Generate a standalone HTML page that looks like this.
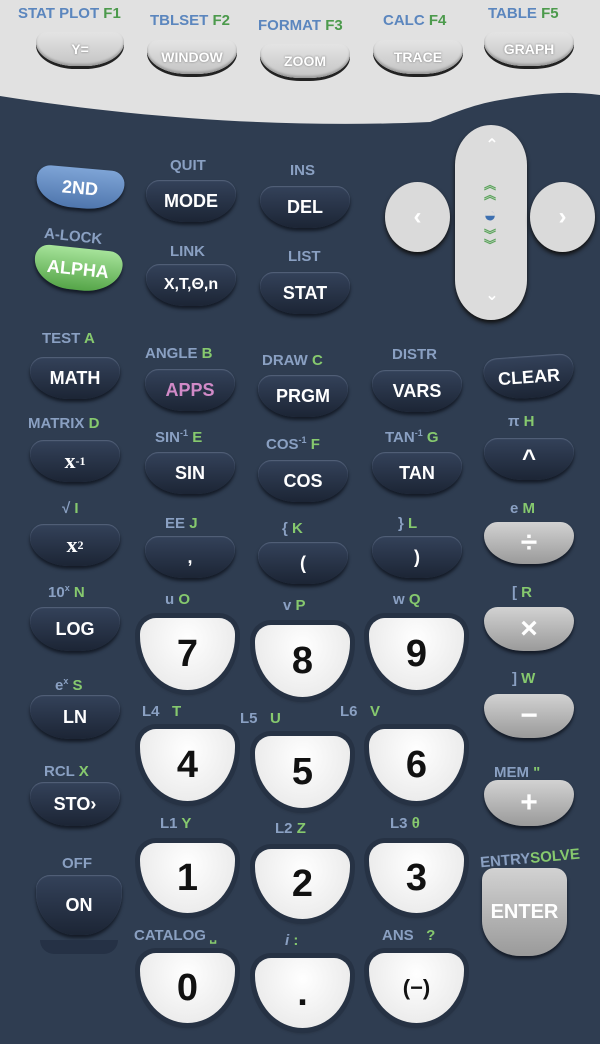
<!DOCTYPE html><html><head><meta charset="utf-8"><style>
*{margin:0;padding:0;box-sizing:border-box}
body{width:600px;height:1044px;background:#2f3d51;position:relative;overflow:hidden;font-family:"Liberation Sans","DejaVu Sans",sans-serif;font-weight:bold}
.a{position:absolute}
.k{position:absolute;display:flex;align-items:center;justify-content:center;border-radius:14px 14px 45% 45%/14px 14px 70% 70%;color:#fff;font-size:18px}
.d{background:linear-gradient(#34425a,#1c2535);box-shadow:0 3px 3px #141b27,inset 0 1px 1px #56647c}
.w{background:radial-gradient(ellipse at 50% 30%,#fff,#ececec 70%,#cfcfcf);color:#111;font-size:38px;border-radius:16px 16px 50% 50%/16px 16px 75% 75%;box-shadow:0 0 0 5px #263244,0 3px 4px #111}
.g{background:linear-gradient(#d2d2d2,#9a9a9a);box-shadow:0 3px 3px #141b27;font-size:30px}
.t{background:linear-gradient(#e4e4e4,#c4c4c4);color:#fff;font-size:14px;text-shadow:0 0 2px #777;box-shadow:0 3px 0 #222,inset 0 -2px 2px #999;border-radius:10px 10px 45% 45%/10px 10px 70% 70%}
.l{position:absolute;font-size:15px;color:#8aa0c2;white-space:nowrap;z-index:2}
.gr{color:#86c96e}
</style></head><body>
<svg class="a" style="left:0;top:0" width="600" height="330"><path d="M0 0H600V95C560 90 530 95 500 100C470 105 450 115 430 122C300 128 150 120 0 96Z" fill="#e1e1e1"/></svg>
<div class="l" style="left:18px;top:5px;color:#5b86be;font-size:15px">STAT PLOT <span style="color:#4c9a4c">F1</span></div>
<div class="l" style="left:150px;top:12px;color:#5b86be;font-size:15px">TBLSET <span style="color:#4c9a4c">F2</span></div>
<div class="l" style="left:258px;top:17px;color:#5b86be;font-size:15px">FORMAT <span style="color:#4c9a4c">F3</span></div>
<div class="l" style="left:383px;top:12px;color:#5b86be;font-size:15px">CALC <span style="color:#4c9a4c">F4</span></div>
<div class="l" style="left:488px;top:5px;color:#5b86be;font-size:15px">TABLE <span style="color:#4c9a4c">F5</span></div>
<div class="k t" style="left:36px;top:32px;width:88px;height:34px">Y=</div>
<div class="k t" style="left:147px;top:40px;width:90px;height:34px">WINDOW</div>
<div class="k t" style="left:260px;top:44px;width:90px;height:34px">ZOOM</div>
<div class="k t" style="left:373px;top:40px;width:90px;height:34px">TRACE</div>
<div class="k t" style="left:484px;top:32px;width:90px;height:34px">GRAPH</div>
<div class="a" style="left:455px;top:125px;width:72px;height:195px;background:#dcdcdc;border-radius:36px/40px;box-shadow:0 3px 4px #111"></div>
<div class="a" style="left:470px;top:180px;width:40px;height:80px;color:#5da55d;font-size:12px;text-align:center;line-height:10px">︽<br>︽<br><span style="color:#3d6fb0;font-size:22px;line-height:30px">◒</span><br>︾<br>︾</div>
<div class="a" style="left:472px;top:135px;width:40px;color:#fff;font-size:16px;text-align:center">⌃</div>
<div class="a" style="left:472px;top:285px;width:40px;color:#fff;font-size:16px;text-align:center">⌄</div>
<div class="a" style="left:385px;top:182px;width:65px;height:70px;background:#dadada;border-radius:50%;box-shadow:0 3px 4px #111;color:#fff;font-size:24px;display:flex;align-items:center;justify-content:center">‹</div>
<div class="a" style="left:530px;top:182px;width:65px;height:70px;background:#dadada;border-radius:50%;box-shadow:0 3px 4px #111;color:#fff;font-size:24px;display:flex;align-items:center;justify-content:center">›</div>
<div class="k" style="left:36px;top:168px;width:88px;height:40px;background:linear-gradient(#7ea4d6,#4f76ad);transform:rotate(5deg);box-shadow:0 3px 3px #141b27">2ND</div>
<div class="l" style="left:170px;top:157px">QUIT</div>
<div class="k d" style="left:146px;top:180px;width:90px;height:42px">MODE</div>
<div class="l" style="left:290px;top:162px">INS</div>
<div class="k d" style="left:260px;top:186px;width:90px;height:42px">DEL</div>
<div class="l" style="left:44px;top:228px;transform:rotate(6deg)">A-LOCK</div>
<div class="k" style="left:34px;top:248px;width:88px;height:42px;background:linear-gradient(#a6e39a,#55a548);transform:rotate(6deg);box-shadow:0 3px 3px #141b27">ALPHA</div>
<div class="l" style="left:170px;top:243px">LINK</div>
<div class="k d" style="left:146px;top:264px;width:90px;height:42px;font-size:16px">X,T,Θ,n</div>
<div class="l" style="left:288px;top:248px">LIST</div>
<div class="k d" style="left:260px;top:272px;width:90px;height:42px">STAT</div>
<div class="l" style="left:42px;top:330px">TEST <span class="gr">A</span></div>
<div class="k d" style="left:30px;top:357px;width:90px;height:42px">MATH</div>
<div class="l" style="left:145px;top:345px">ANGLE <span class="gr">B</span></div>
<div class="k d" style="left:145px;top:369px;width:90px;height:42px;color:#d18ac7">APPS</div>
<div class="l" style="left:262px;top:352px">DRAW <span class="gr">C</span></div>
<div class="k d" style="left:258px;top:375px;width:90px;height:42px">PRGM</div>
<div class="l" style="left:392px;top:346px">DISTR</div>
<div class="k d" style="left:372px;top:370px;width:90px;height:42px">VARS</div>
<div class="k d" style="left:484px;top:356px;width:90px;height:42px;transform:rotate(-4deg)">CLEAR</div>
<div class="l" style="left:28px;top:415px">MATRIX <span class="gr">D</span></div>
<div class="k d" style="left:30px;top:440px;width:90px;height:42px;font-family:'Liberation Serif',serif;font-size:22px">x<sup style="font-size:12px">-1</sup></div>
<div class="l" style="left:155px;top:428px">SIN<sup style="font-size:9px">-1</sup> <span class="gr">E</span></div>
<div class="k d" style="left:145px;top:452px;width:90px;height:42px">SIN</div>
<div class="l" style="left:266px;top:435px">COS<sup style="font-size:9px">-1</sup> <span class="gr">F</span></div>
<div class="k d" style="left:258px;top:460px;width:90px;height:42px">COS</div>
<div class="l" style="left:385px;top:428px">TAN<sup style="font-size:9px">-1</sup> <span class="gr">G</span></div>
<div class="k d" style="left:372px;top:452px;width:90px;height:42px">TAN</div>
<div class="l" style="left:508px;top:413px">π <span class="gr">H</span></div>
<div class="k d" style="left:484px;top:438px;width:90px;height:42px;font-size:24px">^</div>
<div class="l" style="left:62px;top:500px">√ <span class="gr">I</span></div>
<div class="k d" style="left:30px;top:524px;width:90px;height:42px;font-family:'Liberation Serif',serif;font-size:22px">x<sup style="font-size:12px">2</sup></div>
<div class="l" style="left:165px;top:515px">EE <span class="gr">J</span></div>
<div class="k d" style="left:145px;top:536px;width:90px;height:42px">,</div>
<div class="l" style="left:282px;top:520px">{ <span class="gr">K</span></div>
<div class="k d" style="left:258px;top:542px;width:90px;height:42px">(</div>
<div class="l" style="left:398px;top:515px">} <span class="gr">L</span></div>
<div class="k d" style="left:372px;top:536px;width:90px;height:42px">)</div>
<div class="l" style="left:510px;top:500px">e <span class="gr">M</span></div>
<div class="k g" style="left:484px;top:522px;width:90px;height:42px">÷</div>
<div class="l" style="left:48px;top:583px">10<sup style="font-size:9px">x</sup> <span class="gr">N</span></div>
<div class="k d" style="left:30px;top:607px;width:90px;height:44px">LOG</div>
<div class="l" style="left:165px;top:591px">u <span class="gr">O</span></div>
<div class="k w" style="left:140px;top:618px;width:95px;height:72px">7</div>
<div class="l" style="left:283px;top:597px">v <span class="gr">P</span></div>
<div class="k w" style="left:255px;top:625px;width:95px;height:72px">8</div>
<div class="l" style="left:393px;top:591px">w <span class="gr">Q</span></div>
<div class="k w" style="left:369px;top:618px;width:95px;height:72px">9</div>
<div class="l" style="left:512px;top:584px">[ <span class="gr">R</span></div>
<div class="k g" style="left:484px;top:607px;width:90px;height:44px">×</div>
<div class="l" style="left:55px;top:676px">e<sup style="font-size:9px">x</sup> <span class="gr">S</span></div>
<div class="k d" style="left:30px;top:695px;width:90px;height:44px">LN</div>
<div class="l" style="left:142px;top:703px">L4 <span class="gr">&nbsp;&nbsp;T</span></div>
<div class="k w" style="left:140px;top:729px;width:95px;height:72px">4</div>
<div class="l" style="left:240px;top:710px">L5 <span class="gr">&nbsp;&nbsp;U</span></div>
<div class="k w" style="left:255px;top:736px;width:95px;height:72px">5</div>
<div class="l" style="left:340px;top:703px">L6 <span class="gr">&nbsp;&nbsp;V</span></div>
<div class="k w" style="left:369px;top:729px;width:95px;height:72px">6</div>
<div class="l" style="left:512px;top:670px">] <span class="gr">W</span></div>
<div class="k g" style="left:484px;top:694px;width:90px;height:44px">−</div>
<div class="l" style="left:44px;top:763px">RCL <span class="gr">X</span></div>
<div class="k d" style="left:30px;top:782px;width:90px;height:44px">STO›</div>
<div class="l" style="left:160px;top:815px">L1 <span class="gr">Y</span></div>
<div class="k w" style="left:140px;top:843px;width:95px;height:70px">1</div>
<div class="l" style="left:275px;top:820px">L2 <span class="gr">Z</span></div>
<div class="k w" style="left:255px;top:849px;width:95px;height:70px">2</div>
<div class="l" style="left:390px;top:815px">L3 <span class="gr">θ</span></div>
<div class="k w" style="left:369px;top:843px;width:95px;height:70px">3</div>
<div class="l" style="left:494px;top:764px">MEM <span class="gr">"</span></div>
<div class="k g" style="left:484px;top:780px;width:90px;height:46px">+</div>
<div class="l" style="left:62px;top:855px">OFF</div>
<div class="k d" style="left:36px;top:875px;width:86px;height:60px">ON</div>
<div class="a" style="left:40px;top:940px;width:78px;height:14px;border-radius:0 0 40px 40px;background:#253145"></div>
<div class="l" style="left:480px;top:850px;transform:rotate(-5deg)">ENTRY<span class="gr">SOLVE</span></div>
<div class="k g" style="left:482px;top:868px;width:85px;height:88px;font-size:20px;border-radius:12px 12px 45% 45%/12px 12px 40% 40%">ENTER</div>
<div class="l" style="left:134px;top:927px">CATALOG <span class="gr">⎵</span></div>
<div class="k w" style="left:140px;top:953px;width:95px;height:70px">0</div>
<div class="l" style="left:285px;top:932px"><i>i</i> <span class="gr">:</span></div>
<div class="k w" style="left:255px;top:958px;width:95px;height:70px">.</div>
<div class="l" style="left:382px;top:927px">ANS <span class="gr">&nbsp;&nbsp;?</span></div>
<div class="k w" style="left:369px;top:953px;width:95px;height:70px;font-size:22px">(−)</div>
</body></html>
